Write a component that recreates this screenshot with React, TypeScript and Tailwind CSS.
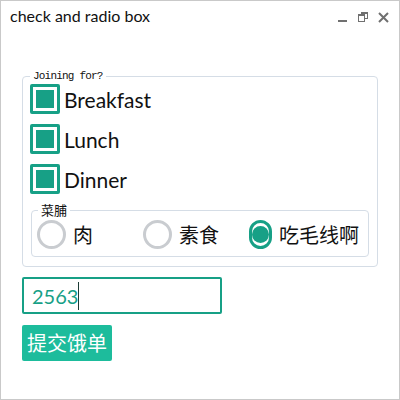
const meals = ['Breakfast', 'Lunch', 'Dinner']
const menus = ['肉', '素食', '吃毛线啊']

function CheckBox() {
  return (
    <span className="w-[30px] h-[30px] border-[3px] border-[#17a086] rounded-[2px] p-[3px] bg-white flex">
      <span className="flex-1 bg-[#17a086]" />
    </span>
  )
}

function Radio({ checked }: { checked: boolean }) {
  return (
    <span
      className={`w-[29px] h-[29px] rounded-full border-[3px] flex items-center justify-center ${
        checked ? 'border-[#17a086]' : 'border-[#c9ccd0]'
      }`}
    >
      {checked && <span className="w-[17px] h-[17px] rounded-full bg-[#17a086]" />}
    </span>
  )
}

export default function App() {
  return (
    <div className="w-[400px] h-[400px] bg-white border border-[#c9c9c9] flex flex-col text-[#111] font-['Lato','Noto_Sans_CJK_SC',sans-serif]">
      {/* title bar */}
      <div className="flex items-start pt-[3px] pl-[9px] pr-[10px] h-[69px]">
        <span className="text-[16px] leading-6 flex-1">check and radio box</span>
        <div className="flex items-start gap-[10px] mt-[8px] text-[#707070]">
          <svg width="10" height="10" viewBox="0 0 10 10">
            <rect x="0" y="8" width="9" height="2" fill="currentColor" />
          </svg>
          <svg width="10" height="10" viewBox="0 0 10 10">
            <rect x="3.5" y="0.5" width="6" height="6" fill="none" stroke="currentColor" />
            <rect x="0.5" y="2.5" width="6" height="7" fill="white" stroke="currentColor" />
            <rect x="0.5" y="2.5" width="6" height="1.5" fill="currentColor" />
            <rect x="3.5" y="0.5" width="6" height="1.5" fill="currentColor" />
          </svg>
          <svg width="11" height="11" viewBox="0 0 11 11">
            <path d="M1 1 L10 10 M10 1 L1 10" stroke="currentColor" strokeWidth="2" />
          </svg>
        </div>
      </div>

      <div className="px-[21px]">
        <fieldset className="w-[356px] border border-[#d5dde6] rounded-[4px] px-[7px] pb-[9px]">
          <legend className="px-[3px] text-[11px] leading-[13px] tracking-[-0.8px] font-['Liberation_Mono',monospace] text-[#111]">
            Joining for?
          </legend>
          <div className="flex flex-col gap-[10px] pt-[1px]">
            {meals.map((m) => (
              <label key={m} className="flex items-center gap-[4px] h-[30px]">
                <CheckBox />
                <span className="text-[21px] leading-none">{m}</span>
              </label>
            ))}
          </div>
          <fieldset className="mt-[9px] ml-[1px] w-[338px] border border-[#d5dde6] rounded-[4px] pl-[5px] pb-[7px]">
            <legend className="ml-[1px] px-[3px] text-[13px] leading-[15px]">菜脯</legend>
            <div className="flex pt-[2px]">
              {menus.map((m, i) => (
                <label key={m} className="w-[106px] flex items-center gap-[7px] shrink-0">
                  <Radio checked={i === 2} />
                  <span className="text-[20px] leading-none whitespace-nowrap">{m}</span>
                </label>
              ))}
            </div>
          </fieldset>
        </fieldset>

        <div className="mt-[10px] w-[200px] h-[37px] border-2 border-[#17a086] rounded-[2px] flex items-center pl-[8px]">
          <span className="text-[20px] text-[#17a086] leading-none">2563</span>
          <span className="w-px h-[28px] bg-[#1d3c36]" />
        </div>

        <button className="mt-[11px] h-[36px] px-[5px] bg-[#1dbc9c] rounded-[2px] text-white text-[20px] leading-none">
          提交饿单
        </button>
      </div>
    </div>
  )
}
